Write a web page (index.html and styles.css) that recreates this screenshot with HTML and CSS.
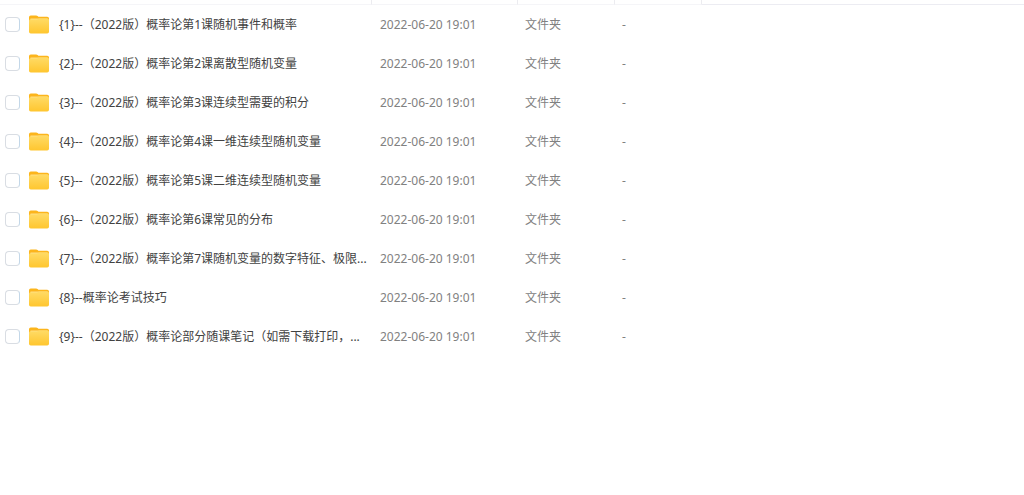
FILE: index.html
```
<!DOCTYPE html>
<html lang="zh-CN">
<head>
    <meta charset="UTF-8">
    <meta name="viewport" content="width=device-width, initial-scale=1.0">
    <title>文件夹</title>
    <link rel="stylesheet" href="styles.css">
</head>
<body>
    <!-- Folder icon shared by all rows -->
    <svg class="sprite" width="0" height="0" aria-hidden="true">
        <defs>
            <linearGradient id="front" x1="0" y1="0" x2="0" y2="1">
                <stop offset="0" stop-color="#ffdb66"/>
                <stop offset="1" stop-color="#ffc62f"/>
            </linearGradient>
            <symbol id="folder" viewBox="0 0 20 19">
                <path d="M0 2.2Q0 .5 1.7 .5H7.2Q8 .5 8.6 1.1L9.4 1.8H18.2Q20 1.8 20 3.5V10H0Z" fill="#fcb51c"/>
                <path d="M1.5 3.6H18.5V8H1.5Z" fill="#ffe9a6"/>
                <path d="M0 5.8Q0 4.3 1.6 4.3H7.4Q8.2 4.3 8.9 3.9Q9.6 3.5 10.4 3.5H18.4Q20 3.5 20 5.1V16.8Q20 18.5 18.2 18.5H1.8Q0 18.5 0 16.8Z" fill="url(#front)"/>
            </symbol>
        </defs>
    </svg>
    <table class="file-list">
        <colgroup>
            <col class="col-name">
            <col class="col-time">
            <col class="col-type">
            <col class="col-size">
            <col>
        </colgroup>
        <thead>
            <tr><th></th><th></th><th></th><th></th><th></th></tr>
        </thead>
        <tbody>
            <tr>
                <td><div class="name"><input type="checkbox" id="f1"><svg class="icon"><use href="#folder"/></svg><label for="f1">{1}--（2022版）概率论第1课随机事件和概率</label></div></td>
                <td>2022-06-20 19:01</td><td>文件夹</td><td>-</td><td></td>
            </tr>
            <tr>
                <td><div class="name"><input type="checkbox" id="f2"><svg class="icon"><use href="#folder"/></svg><label for="f2">{2}--（2022版）概率论第2课离散型随机变量</label></div></td>
                <td>2022-06-20 19:01</td><td>文件夹</td><td>-</td><td></td>
            </tr>
            <tr>
                <td><div class="name"><input type="checkbox" id="f3"><svg class="icon"><use href="#folder"/></svg><label for="f3">{3}--（2022版）概率论第3课连续型需要的积分</label></div></td>
                <td>2022-06-20 19:01</td><td>文件夹</td><td>-</td><td></td>
            </tr>
            <tr>
                <td><div class="name"><input type="checkbox" id="f4"><svg class="icon"><use href="#folder"/></svg><label for="f4">{4}--（2022版）概率论第4课一维连续型随机变量</label></div></td>
                <td>2022-06-20 19:01</td><td>文件夹</td><td>-</td><td></td>
            </tr>
            <tr>
                <td><div class="name"><input type="checkbox" id="f5"><svg class="icon"><use href="#folder"/></svg><label for="f5">{5}--（2022版）概率论第5课二维连续型随机变量</label></div></td>
                <td>2022-06-20 19:01</td><td>文件夹</td><td>-</td><td></td>
            </tr>
            <tr>
                <td><div class="name"><input type="checkbox" id="f6"><svg class="icon"><use href="#folder"/></svg><label for="f6">{6}--（2022版）概率论第6课常见的分布</label></div></td>
                <td>2022-06-20 19:01</td><td>文件夹</td><td>-</td><td></td>
            </tr>
            <tr>
                <td><div class="name"><input type="checkbox" id="f7"><svg class="icon"><use href="#folder"/></svg><label for="f7">{7}--（2022版）概率论第7课随机变量的数字特征、极限...</label></div></td>
                <td>2022-06-20 19:01</td><td>文件夹</td><td>-</td><td></td>
            </tr>
            <tr>
                <td><div class="name"><input type="checkbox" id="f8"><svg class="icon"><use href="#folder"/></svg><label for="f8">{8}--概率论考试技巧</label></div></td>
                <td>2022-06-20 19:01</td><td>文件夹</td><td>-</td><td></td>
            </tr>
            <tr>
                <td><div class="name"><input type="checkbox" id="f9"><svg class="icon"><use href="#folder"/></svg><label for="f9">{9}--（2022版）概率论部分随课笔记（如需下载打印，...</label></div></td>
                <td>2022-06-20 19:01</td><td>文件夹</td><td>-</td><td></td>
            </tr>
        </tbody>
    </table>
</body>
</html>
```
FILE: styles.css
```
body {
    margin: 0;
    background: #fff;
    font-family: "Noto Sans", "Noto Sans CJK SC", sans-serif;
    font-size: 12px;
    line-height: 18px;
    color: #818181;
}

.sprite {
    display: block;
}

.file-list {
    width: 100%;
    table-layout: fixed;
    border-collapse: separate;
    border-spacing: 0;
}

.col-name {
    width: 372px;
}

.col-time {
    width: 146px;
}

.col-type {
    width: 97px;
}

.col-size {
    width: 87px;
}

/* Column headings strip */
th {
    height: 4px;
    padding: 0;
    border-right: 1px solid #ececf0;
    border-bottom: 1px solid #f5f5f8;
}

th:last-child {
    border-right: none;
    border-bottom-color: #ececf2;
}

td {
    height: 39px;
    padding: 0 0 0 7px;
    white-space: nowrap;
}

td:first-child {
    padding-left: 5px;
}

td:nth-child(2) {
    padding-left: 8px;
}

.name {
    display: flex;
    align-items: center;
    color: #424242;
}

.name input {
    appearance: none;
    box-sizing: border-box;
    flex: none;
    width: 15px;
    height: 15px;
    margin: 0;
    border: 1px solid #d9dde3;
    border-right-color: #c3d7e8;
    border-radius: 4px;
    background: #fff;
}

.name input:checked {
    background: #06a7ff;
}

.icon {
    flex: none;
    width: 20px;
    height: 19px;
    margin: 0 10px 0 9px;
}
```
